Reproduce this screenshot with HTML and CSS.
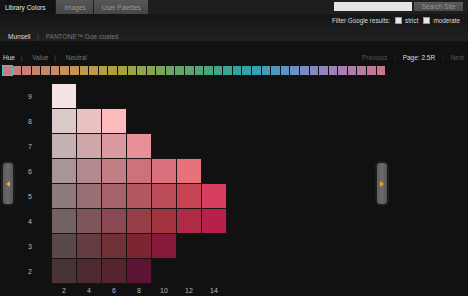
FILE: index.html
```html
<!DOCTYPE html>
<html lang="en">
<head>
    <meta charset="UTF-8">
    <title>Library Colors - Munsell</title>
    <link rel="stylesheet" href="styles.css">
</head>
<body>
    <div class="topbar">
        <div class="tabs">
            <div class="tab active">Library Colors</div>
            <div class="tab">Images</div>
            <div class="tab">User Palettes</div>
        </div>
        <div class="search">
            <div class="search-input"></div>
            <div class="search-btn">Search Site</div>
        </div>
    </div>

    <div class="header">
        <div class="filter">
            Filter Google results:
            <span class="check"></span> strict
            <span class="check"></span> moderate
        </div>
        <div class="sources">
            <span class="current">Munsell</span>
            <span class="sep">|</span>
            <span>PANTONE™ Goe coated</span>
        </div>
    </div>

    <div class="nav">
        <div class="modes">
            <span class="current">Hue</span>
            <span class="sep">|</span>
            <span>Value</span>
            <span class="sep">|</span>
            <span>Neutral</span>
        </div>
        <div class="pager">
            <span>Previous</span>
            <span class="sep">:</span>
            <span class="current">Page: 2.5R</span>
            <span class="sep">:</span>
            <span>Next</span>
        </div>
    </div>

    <div id="hues" class="hues"></div>

    <div class="chart">
        <div class="arrow left"><span></span></div>
        <div id="grid" class="grid"></div>
        <div class="arrow right"><span></span></div>
    </div>

    <script>
        // Hue strip: key colours, filled in between
        const hueKeys = [
            [0, '#c77a80'], [3, '#c7836f'], [6, '#c49160'], [9, '#bb9a48'],
            [11, '#ae9f3e'], [13, '#9da344'], [15, '#85a450'], [18, '#63a46a'],
            [21, '#4aa480'], [24, '#35a2a0'], [26, '#3aa0b0'], [28, '#4c98c0'],
            [30, '#6a90c4'], [32, '#8587c0'], [34, '#9c80b8'], [36, '#b07ca8'],
            [38, '#bf7894'], [39, '#c67888']
        ];

        function hex(c) {
            return [1, 3, 5].map(i => parseInt(c.substr(i, 2), 16));
        }

        const hues = document.getElementById('hues');
        for (let i = 0; i < 40; i++) {
            let k = 0;
            while (hueKeys[k + 1] && hueKeys[k + 1][0] <= i) k++;
            const a = hueKeys[k];
            const b = hueKeys[k + 1] || a;
            const t = b[0] === a[0] ? 0 : (i - a[0]) / (b[0] - a[0]);
            const ca = hex(a[1]), cb = hex(b[1]);
            const rgb = ca.map((v, j) => Math.round(v + (cb[j] - v) * t));
            const sw = document.createElement('div');
            sw.className = 'swatch' + (i === 0 ? ' selected' : '');
            sw.style.background = 'rgb(' + rgb.join(',') + ')';
            hues.appendChild(sw);
        }

        // Munsell 2.5R page: value -> chroma 2, 4, 6 ...
        const page = [
            [9, ['#f5e2e2']],
            [8, ['#dbc9c8', '#e9c1c3', '#fcb9be']],
            [7, ['#c5b1b2', '#d0a6a8', '#da999e', '#e88f97']],
            [6, ['#a99597', '#b58a8e', '#c17e84', '#cc7279', '#d8717b', '#e8727a']],
            [5, ['#8f7b7d', '#9a6f74', '#a6636b', '#b15860', '#bc4c58', '#c84353', '#d63d5e']],
            [4, ['#746163', '#7f555a', '#8a4950', '#963d47', '#a1333f', '#ae2b46', '#b8204c']],
            [3, ['#5b484a', '#653c41', '#703038', '#7b2631', '#861a3a']],
            [2, ['#483436', '#4e2a30', '#55242c', '#5c1434']]
        ];

        const grid = document.getElementById('grid');
        page.forEach(function(row) {
            const label = document.createElement('div');
            label.className = 'row-label';
            label.textContent = row[0];
            grid.appendChild(label);
            for (let c = 0; c < 7; c++) {
                const cell = document.createElement('div');
                cell.className = 'cell';
                if (row[1][c]) {
                    cell.classList.add('filled');
                    cell.style.background = row[1][c];
                }
                grid.appendChild(cell);
            }
        });

        grid.appendChild(document.createElement('div'));
        [2, 4, 6, 8, 10, 12, 14].forEach(function(n) {
            const label = document.createElement('div');
            label.className = 'col-label';
            label.textContent = n;
            grid.appendChild(label);
        });
    </script>
</body>
</html>
```

FILE: styles.css
```css
body {
    margin: 0;
    width: 468px;
    height: 296px;
    overflow: hidden;
    background-color: #111;
    font-family: 'Liberation Sans', Arial, sans-serif;
    font-size: 6.5px;
    color: #777;
}
.topbar {
    display: flex;
    justify-content: space-between;
    height: 14px;
    background-color: #1e1e1e;
}
.tabs {
    display: flex;
}
.tab {
    display: flex;
    align-items: center;
    padding: 0 7px 0 8px;
    margin-right: 1px;
    background: linear-gradient(#575757, #464646);
    color: #999;
}
.tab.active {
    background: #121212;
    color: #e6e6e6;
    padding: 0 10px 0 5px;
}
.search {
    display: flex;
    align-items: flex-start;
    gap: 2px;
    padding: 2px 5px 0 0;
}
.search-input {
    width: 78px;
    height: 9px;
    background-color: #e4e4e4;
}
.search-btn {
    width: 49px;
    height: 9px;
    line-height: 9px;
    text-align: center;
    background: linear-gradient(#5a5a5a, #4a4a4a);
    color: #999;
}
.header {
    height: 27px;
    background: linear-gradient(#161616, #212121);
}
.filter {
    display: flex;
    justify-content: flex-end;
    align-items: center;
    gap: 3px;
    padding: 3px 8px 0 0;
    color: #ddd;
    font-size: 6.3px;
}
.check {
    display: inline-block;
    width: 5px;
    height: 5px;
    margin-left: 2px;
    background-color: #e8e8e8;
    border: 1px solid #999;
}
.sources {
    padding: 9px 0 0 8px;
}
.sources span, .modes span, .pager span {
    margin-right: 5px;
}
.current {
    color: #ddd;
}
.sep {
    color: #555;
}
.nav {
    display: flex;
    justify-content: space-between;
    padding: 13px 4px 0 3px;
    height: 11px;
}
.modes .sep {
    margin-right: 8px;
}
.modes span:not(.sep) {
    margin-right: 4px;
}
.pager span {
    margin-right: 0;
    margin-left: 5px;
}
.pager span:not(.current) {
    color: #555;
}
.hues {
    display: flex;
    gap: 1px;
    width: 382px;
    height: 9px;
    margin: 1px 0 0 3px;
}
.swatch {
    flex: 1;
}
.swatch.selected {
    outline: 1px solid #45c6c6;
}
.chart {
    display: flex;
    align-items: flex-start;
    width: 387px;
    padding-left: 3px;
    box-sizing: border-box;
    margin-top: 9px;
}
.grid {
    display: grid;
    grid-template-columns: 38px repeat(7, 24px);
    grid-template-rows: repeat(8, 24px) 12px;
    gap: 1px;
    margin-right: auto;
}
.cell.filled {
    box-shadow: 0 0 0 1px #1c1214;
}
.row-label, .col-label {
    display: flex;
    align-items: center;
    justify-content: center;
    color: #bbb;
    font-size: 7px;
}
.row-label {
    padding-right: 4px;
}
.col-label {
    padding-top: 1px;
}
.arrow {
    display: flex;
    align-items: center;
    justify-content: center;
    width: 10px;
    height: 41px;
    margin-top: 79px;
    border-radius: 3px;
    background: linear-gradient(90deg, #5c5c5c, #6a6a6a, #555);
    box-shadow: 0 0 0 2px #1d1d1d;
}
.arrow span {
    width: 0;
    height: 0;
    border-top: 3px solid transparent;
    border-bottom: 3px solid transparent;
}
.arrow.left span {
    border-right: 4px solid #f0a030;
}
.arrow.right span {
    border-left: 4px solid #f0a030;
}
```
